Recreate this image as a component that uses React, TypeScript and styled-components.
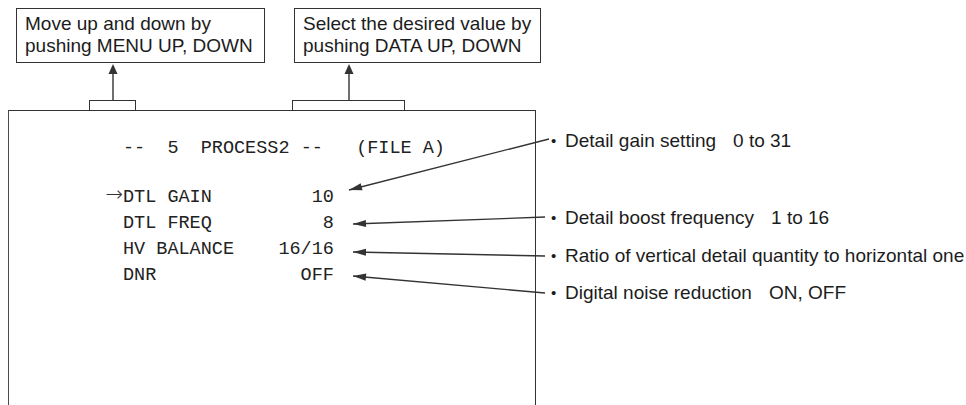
import styled, { createGlobalStyle } from "styled-components";

const GlobalStyle = createGlobalStyle`
  html, body {
    margin: 0;
    padding: 0;
    background: #ffffff;
  }
  body {
    font-family: "Liberation Sans", Arial, sans-serif;
    color: #1c1c1c;
  }
`;

const INK = "#333333";

const Page = styled.div`
  position: relative;
  width: 966px;
  height: 405px;
  overflow: hidden;
  background: #ffffff;
  display: flex;
  flex-direction: row;
`;

const LeftColumn = styled.div`
  width: 528px;
  margin-left: 8px;
  display: flex;
  flex-direction: column;
`;

const CalloutRow = styled.div`
  display: flex;
  flex-direction: row;
  height: 110px;
`;

const Callout = styled.div<{ $offset: number }>`
  display: flex;
  flex-direction: column;
  align-items: flex-start;
  padding-top: 8px;
  margin-left: ${({ $offset }) => $offset}px;
  flex-shrink: 0;
`;

const LabelBox = styled.div<{ $width: number }>`
  box-sizing: border-box;
  width: ${({ $width }) => $width}px;
  height: 55px;
  padding: 4px 0 0 8px;
  border: 1.3px solid ${INK};
  font-size: 19px;
  line-height: 22px;
  white-space: nowrap;
`;

const Pointer = styled.div<{ $left: number; $width: number }>`
  flex: 1;
  display: flex;
  flex-direction: column;
  align-items: center;
  margin-left: ${({ $left }) => $left}px;
  width: ${({ $width }) => $width}px;
`;

const Stem = styled.svg`
  flex: 1;
  width: 12px;
  display: block;
`;

const Bracket = styled.div`
  box-sizing: border-box;
  align-self: stretch;
  height: 10px;
  border: 1.3px solid ${INK};
  border-bottom: none;
`;

const Screen = styled.div`
  box-sizing: border-box;
  height: 320px;
  border-top: 1.3px solid ${INK};
  border-left: 1.8px solid #4a4a4a;
  border-right: 1.3px solid ${INK};
  padding: 26px 0 0 114px;
  font-family: "Liberation Mono", "Courier New", monospace;
  font-size: 18.5px;
  color: #222222;
`;

const Title = styled.div`
  white-space: pre;
  line-height: 24px;
  margin-bottom: 24px;
`;

const MenuRow = styled.div`
  position: relative;
  display: flex;
  justify-content: space-between;
  width: 19ch;
  line-height: 26px;
  white-space: pre;
`;

const Cursor = styled.span`
  position: absolute;
  right: 100%;
  top: -4px;
  font-family: "DejaVu Sans", sans-serif;
  font-weight: 200;
  font-size: 21px;
  line-height: 26px;
  color: #333333;
`;

const RightColumn = styled.div`
  display: flex;
  flex-direction: column;
  padding: 130px 0 0 15px;
`;

const Note = styled.div<{ $gap: number }>`
  display: flex;
  flex-direction: row;
  margin-top: ${({ $gap }) => $gap}px;
  font-size: 19px;
  line-height: 22px;
  white-space: nowrap;
`;

const Bullet = styled.span`
  width: 14px;
  flex-shrink: 0;
  font-size: 15px;
`;

const Range = styled.span`
  margin-left: 17px;
`;

const Leaders = styled.svg`
  position: absolute;
  left: 0;
  top: 0;
  pointer-events: none;
`;

type Pt = [number, number];

function arrowHead(tip: Pt, from: Pt, len = 13, half = 3.6): string {
  const dx = from[0] - tip[0];
  const dy = from[1] - tip[1];
  const d = Math.hypot(dx, dy);
  const ux = dx / d;
  const uy = dy / d;
  const bx = tip[0] + ux * len;
  const by = tip[1] + uy * len;
  const px = -uy * half;
  const py = ux * half;
  return `${tip[0]},${tip[1]} ${bx + px},${by + py} ${bx - px},${by - py}`;
}

const leaders: { from: Pt; tip: Pt }[] = [
  { from: [549, 139], tip: [349, 190] },
  { from: [545, 217], tip: [353, 224] },
  { from: [545, 256], tip: [353, 252] },
  { from: [545, 293], tip: [353, 276] },
];

const menu = [
  { label: "DTL GAIN", value: "10", active: true },
  { label: "DTL FREQ", value: "8" },
  { label: "HV BALANCE", value: "16/16" },
  { label: "DNR", value: "OFF" },
];

function UpArrow() {
  return (
    <Stem viewBox="0 0 12 37" preserveAspectRatio="none">
      <polygon points="6,1 1.5,11 10.5,11" fill={INK} />
      <line x1="6" y1="10" x2="6" y2="37" stroke={INK} strokeWidth="1.4" />
    </Stem>
  );
}

export default function App() {
  return (
    <>
      <GlobalStyle />
      <Page>
        <LeftColumn>
          <CalloutRow>
            <Callout $offset={8}>
              <LabelBox $width={249}>
                Move up and down by
                <br />
                pushing MENU UP, DOWN
              </LabelBox>
              <Pointer $left={73} $width={47}>
                <UpArrow />
                <Bracket />
              </Pointer>
            </Callout>
            <Callout $offset={29}>
              <LabelBox $width={247}>
                Select the desired value by
                <br />
                pushing DATA UP, DOWN
              </LabelBox>
              <Pointer $left={-2} $width={113}>
                <UpArrow />
                <Bracket />
              </Pointer>
            </Callout>
          </CalloutRow>

          <Screen>
            <Title>{"--  5  PROCESS2 --   (FILE A)"}</Title>
            {menu.map((item) => (
              <MenuRow key={item.label}>
                {item.active && <Cursor>→</Cursor>}
                <span>{item.label}</span>
                <span>{item.value}</span>
              </MenuRow>
            ))}
          </Screen>
        </LeftColumn>

        <RightColumn>
          <Note $gap={0}>
            <Bullet>•</Bullet>
            Detail gain setting<Range>0 to 31</Range>
          </Note>
          <Note $gap={55}>
            <Bullet>•</Bullet>
            Detail boost frequency<Range>1 to 16</Range>
          </Note>
          <Note $gap={16}>
            <Bullet>•</Bullet>
            Ratio of vertical detail quantity to horizontal one
          </Note>
          <Note $gap={15}>
            <Bullet>•</Bullet>
            Digital noise reduction<Range>ON, OFF</Range>
          </Note>
        </RightColumn>

        <Leaders width={966} height={405}>
          {leaders.map(({ from, tip }, i) => (
            <g key={i}>
              <line x1={from[0]} y1={from[1]} x2={tip[0]} y2={tip[1]} stroke={INK} strokeWidth="1.3" />
              <polygon points={arrowHead(tip, from)} fill={INK} />
            </g>
          ))}
        </Leaders>
      </Page>
    </>
  );
}
